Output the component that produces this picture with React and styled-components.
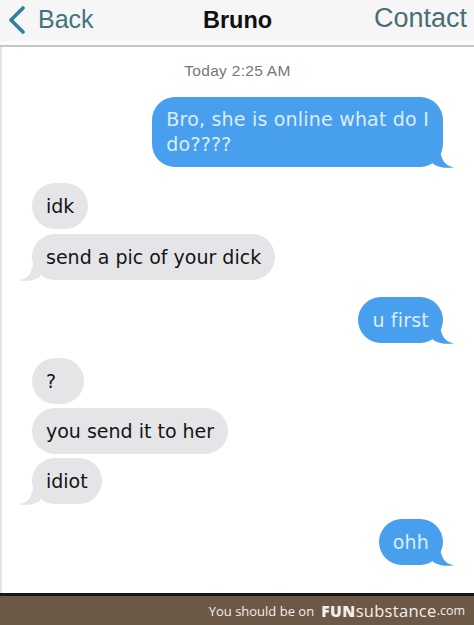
import React from "react";
import styled, { createGlobalStyle } from "styled-components";

const Global = createGlobalStyle`
  html, body { margin: 0; padding: 0; background: #fff; }
  body { width: 474px; height: 625px; overflow: hidden; }
`;

const Screen = styled.div`
  width: 474px;
  height: 625px;
  display: flex;
  flex-direction: column;
  font-family: "Liberation Sans", Arial, sans-serif;
`;

const Header = styled.header`
  height: 45px;
  flex: none;
  background: #f6f6f6;
  border-bottom: 2px solid #c6c6c6;
  display: grid;
  grid-template-columns: 1fr auto 1fr;
  align-items: center;
  padding: 0 7px 0 8px;
  box-shadow: inset 0 -4px 0 #fbfbfb;
`;

const BackButton = styled.div`
  display: flex;
  align-items: center;
  gap: 12px;
  color: #44737f;
  font-size: 25px;
  margin-top: -6px;
`;

const Title = styled.div`
  font-weight: 700;
  font-size: 23.5px;
  color: #111;
  margin-top: -4px;
`;

const ContactButton = styled.div`
  justify-self: end;
  color: #4c6d76;
  font-size: 27px;
  margin-top: -8px;
`;

const Chat = styled.main`
  flex: 1;
  background: #fff;
  border-left: 2px solid #e4e4e4;
  display: flex;
  flex-direction: column;
  padding: 15px 31px 0 30px;
`;

const Stamp = styled.div`
  align-self: center;
  font-size: 15.5px;
  color: #777;
  letter-spacing: 0.3px;
  line-height: 18px;
  margin: 0 0 17px 0;
`;

const Bubble = styled.div`
  position: relative;
  align-self: ${(p) => (p.$me ? "flex-end" : "flex-start")};
  min-width: 52px;
  box-sizing: border-box;
  background: ${(p) => (p.$me ? "#479fee" : "#e5e5e8")};
  color: ${(p) => (p.$me ? "#dcedff" : "#141414")};
  font-family: "DejaVu Sans", Verdana, sans-serif;
  font-size: 19px;
  letter-spacing: ${(p) => (p.$me ? "0.2px" : "0")};
  line-height: ${(p) => (p.$multi ? "25px" : "24px")};
  padding: ${(p) => (p.$multi ? "10px 14px" : "11px 14px")};
  border-radius: 23px;
  margin-top: ${(p) => p.$gap}px;
`;

const Tail = styled.svg`
  position: absolute;
  bottom: -1px;
  width: 22px;
  height: 20px;
  ${(p) => (p.$me ? "right: -12px;" : "left: -14px; transform: scaleX(-1);")}
`;

const Footer = styled.footer`
  height: 29px;
  flex: none;
  background: #6b5847;
  border-top: 3px solid #161616;
  display: flex;
  align-items: center;
  justify-content: flex-end;
  padding-right: 9px;
  font-family: "Open Sans", sans-serif;
  color: #f3eee9;
`;

const FooterText = styled.span`
  font-size: 13px;
  margin-right: 7px;
`;

const Fun = styled.span`
  font-weight: 800;
  font-size: 15.5px;
  letter-spacing: 0.5px;
`;

const Sub = styled.span`
  font-size: 16.5px;
  letter-spacing: 0.3px;
`;

const Com = styled.span`
  font-size: 12.5px;
`;

function TailShape({ me, color }) {
  return (
    <Tail $me={me} viewBox="0 0 22 20" aria-hidden="true">
      <path d="M0 0 C5 0 8 6 9 10 C11 15 14 18 21 19.5 C13 20.5 6 19.5 0 16 Z" fill={color} />
    </Tail>
  );
}

function Msg({ me, gap, tail, multi, children }) {
  return (
    <Bubble $me={me} $gap={gap} $multi={multi}>
      {children}
      {tail && <TailShape me={me} color={me ? "#479fee" : "#e5e5e8"} />}
    </Bubble>
  );
}

export default function App() {
  return (
    <>
      <Global />
      <Screen>
        <Header>
          <BackButton>
            <svg width="18" height="28" viewBox="0 0 18 28" aria-hidden="true">
              <path d="M15 2 L3 14 L15 26" fill="none" stroke="#2f7fa3" strokeWidth="3.6" strokeLinecap="round" strokeLinejoin="round" />
            </svg>
            Back
          </BackButton>
          <Title>Bruno</Title>
          <ContactButton>Contact</ContactButton>
        </Header>
        <Chat>
          <Stamp>Today 2:25 AM</Stamp>
          <Msg me multi tail gap={0}>
            Bro, she is online what do I
            <br />
            do????
          </Msg>
          <Msg gap={16}>idk</Msg>
          <Msg gap={5} tail>send a pic of your dick</Msg>
          <Msg me tail gap={17}>u first</Msg>
          <Msg gap={15}>?</Msg>
          <Msg gap={4}>you send it to her</Msg>
          <Msg gap={4} tail>idiot</Msg>
          <Msg me tail gap={15}>ohh</Msg>
        </Chat>
        <Footer>
          <FooterText>You should be on</FooterText>
          <Fun>FUN</Fun>
          <Sub>substance</Sub>
          <Com>.com</Com>
        </Footer>
      </Screen>
    </>
  );
}
